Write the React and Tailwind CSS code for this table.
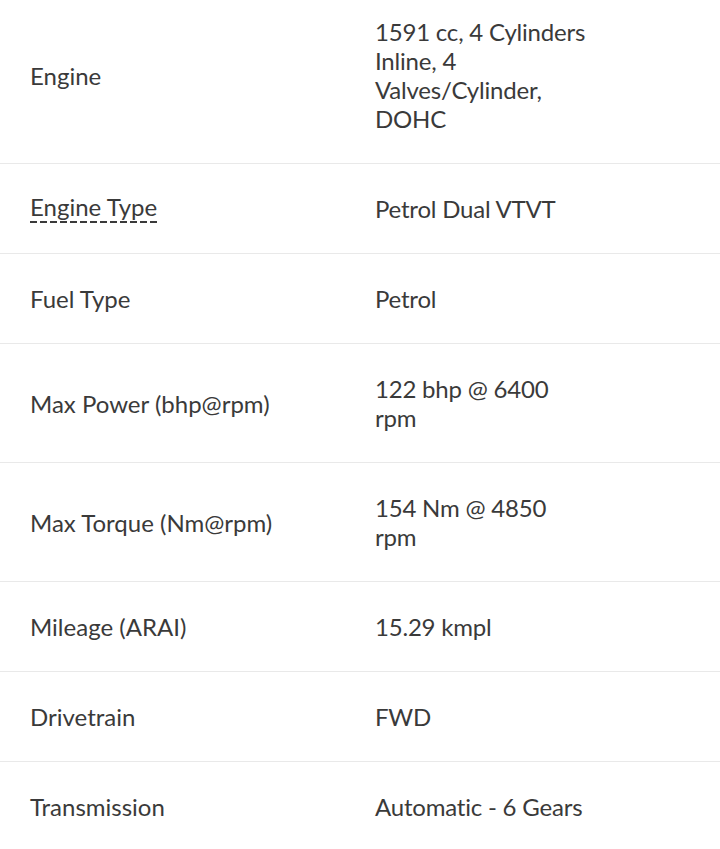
const specs = [
  { label: 'Engine', value: '1591 cc, 4 Cylinders Inline, 4 Valves/Cylinder, DOHC' },
  { label: 'Engine Type', value: 'Petrol Dual VTVT', dashed: true },
  { label: 'Fuel Type', value: 'Petrol' },
  { label: 'Max Power (bhp@rpm)', value: '122 bhp @ 6400 rpm' },
  { label: 'Max Torque (Nm@rpm)', value: '154 Nm @ 4850 rpm' },
  { label: 'Mileage (ARAI)', value: '15.29 kmpl' },
  { label: 'Drivetrain', value: 'FWD' },
  { label: 'Transmission', value: 'Automatic - 6 Gears' },
];

export default function App() {
  return (
    <div className="h-[849px] overflow-hidden bg-white font-['Lato',sans-serif] text-[24px] leading-[29px] text-[#3a3a3a]">
      <div className="-mt-[13px]">
        {specs.map((s) => (
          <div key={s.label} className="flex items-center border-b border-[#e9e9e9] px-[30px] py-[30px]">
            <div className="flex w-[345px] shrink-0">
              {s.dashed ? (
                <span className="block bg-[repeating-linear-gradient(to_right,#3a3a3a_0_7px,transparent_7px_10px)] bg-[length:100%_2px] bg-bottom bg-no-repeat pb-[3px] leading-[26px]">
                  {s.label}
                </span>
              ) : (
                s.label
              )}
            </div>
            <div className="w-[212px] tracking-[-0.2px]">{s.value}</div>
          </div>
        ))}
      </div>
    </div>
  );
}
